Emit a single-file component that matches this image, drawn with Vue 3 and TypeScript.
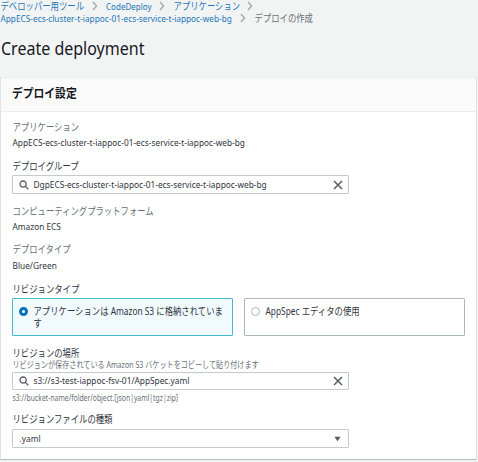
<script setup lang="ts">
import { ref } from 'vue'

const application = 'AppECS-ecs-cluster-t-iappoc-01-ecs-service-t-iappoc-web-bg'
const group = ref('DgpECS-ecs-cluster-t-iappoc-01-ecs-service-t-iappoc-web-bg')
const location = ref('s3://s3-test-iappoc-fsv-01/AppSpec.yaml')
const revisionType = ref<'s3' | 'editor'>('s3')
</script>

<template>
  <main class="page">
    <nav class="crumbs">
      <div class="crumb-row">
        <a class="crumb tools"><span class="t">デベロッパー用ツール</span></a>
        <svg class="chev" viewBox="0 0 6 10"><path d="M1 1l3.6 4L1 9" /></svg>
        <a class="crumb deploy"><span class="t en">CodeDeploy</span></a>
        <svg class="chev" viewBox="0 0 6 10"><path d="M1 1l3.6 4L1 9" /></svg>
        <a class="crumb apps"><span class="t">アプリケーション</span></a>
        <svg class="chev" viewBox="0 0 6 10"><path d="M1 1l3.6 4L1 9" /></svg>
      </div>
      <div class="crumb-row">
        <a class="crumb app"><span class="t en">{{ application }}</span></a>
        <svg class="chev" viewBox="0 0 6 10"><path d="M1 1l3.6 4L1 9" /></svg>
        <span class="crumb current"><span class="t">デプロイの作成</span></span>
      </div>
    </nav>

    <h1 class="title"><span class="t">Create deployment</span></h1>

    <section class="panel">
      <header class="panel-head"><h2 class="t">デプロイ設定</h2></header>
      <div class="panel-body">
        <div class="field">
          <div class="line muted"><span class="t">アプリケーション</span></div>
          <div class="line value"><span class="t en">{{ application }}</span></div>
        </div>

        <div class="field group">
          <div class="line"><span class="t">デプロイグループ</span></div>
          <div class="control">
            <svg class="search" viewBox="0 0 10 10"><circle cx="4.1" cy="4.1" r="3.1" /><path d="M6.4 6.4L9.3 9.3" /></svg>
            <span class="t en">{{ group }}</span>
            <svg class="clear" viewBox="0 0 10 10"><path d="M1 1l8 8M9 1L1 9" /></svg>
          </div>
        </div>

        <div class="field platform">
          <div class="line muted"><span class="t">コンピューティングプラットフォーム</span></div>
          <div class="line value"><span class="t en">Amazon ECS</span></div>
        </div>

        <div class="field type">
          <div class="line muted"><span class="t">デプロイタイプ</span></div>
          <div class="line value"><span class="t en">Blue/Green</span></div>
        </div>

        <div class="field revision">
          <div class="line"><span class="t">リビジョンタイプ</span></div>
          <div class="tiles">
            <div class="tile" :class="{ selected: revisionType === 's3' }" @click="revisionType = 's3'">
              <i class="radio"></i>
              <span class="t">アプリケーションは Amazon S3 に格納されていま<br />す</span>
            </div>
            <div class="tile" :class="{ selected: revisionType === 'editor' }" @click="revisionType = 'editor'">
              <i class="radio"></i>
              <span class="t">AppSpec エディタの使用</span>
            </div>
          </div>
        </div>

        <div class="field location">
          <div class="line"><span class="t">リビジョンの場所</span></div>
          <div class="desc"><span class="t">リビジョンが保存されている Amazon S3 バケットをコピーして貼り付けます</span></div>
          <div class="control">
            <svg class="search" viewBox="0 0 10 10"><circle cx="4.1" cy="4.1" r="3.1" /><path d="M6.4 6.4L9.3 9.3" /></svg>
            <span class="t en">{{ location }}</span>
            <svg class="clear" viewBox="0 0 10 10"><path d="M1 1l8 8M9 1L1 9" /></svg>
          </div>
          <div class="hint"><span class="t">s3://bucket-name/folder/object.[json|yaml|tgz|zip]</span></div>
        </div>

        <div class="field file">
          <div class="line"><span class="t">リビジョンファイルの種類</span></div>
          <div class="control select">
            <span class="t en">.yaml</span>
            <svg class="arrow" viewBox="0 0 8 6"><path d="M0.5 0.5h7L4 5.5z" /></svg>
          </div>
        </div>
      </div>
    </section>
  </main>
</template>

<style>
body {
  margin: 0;
  background: #f2f3f3;
  overflow: hidden;
}
</style>

<style scoped>
.page {
  box-sizing: border-box;
  width: 478px;
  height: 462px;
  overflow: hidden;
  background: #f2f3f3;
  color: #30353c;
  font-family: 'Noto Sans', 'Noto Sans CJK JP', sans-serif;
  font-size: 10.45px;
}
.t {
  display: inline-block;
  white-space: nowrap;
  transform: translateX(0.5px) scaleX(0.8);
  transform-origin: 0 50%;
}
/* Latin-only text is set smaller and less condensed than kana */
.en {
  font-size: 9.7px;
  transform: translateX(0.5px) scaleX(0.858);
}
.crumb-row {
  display: flex;
  align-items: center;
  height: 12px;
  line-height: 12px;
  color: #2277b9;
}
.crumb { flex: none; }
.crumb .en { transform: translateX(0.5px) scaleX(0.854); }
.tools { width: 92px; }
.deploy { width: 53px; margin-left: 8px; }
.deploy .en { transform: scaleX(0.83); }
.apps { width: 74px; margin-left: 8px; }
.app { width: 240px; }
.current { margin-left: 8px; color: #687078; }
.chev {
  flex: none;
  width: 6px;
  height: 10px;
  fill: none;
  stroke: #9fa9a9;
  stroke-width: 1.3;
}
.title {
  margin: 9px 0 0 1px;
  height: 30px;
  line-height: 30px;
  font-size: 17.6px;
  font-weight: 400;
  color: #16191f;
}
.title .t { transform: scaleX(0.91); }
.panel {
  box-sizing: border-box;
  width: 477px;
  height: 383px;
  margin-top: 14px;
  border: 1px solid #dfe3e3;
  border-top-color: #eaeded;
  border-bottom: 1px solid #b4bdbd;
  background: #fff;
}
.panel-head {
  height: 33px;
  background: #fafafa;
  border-bottom: 1px solid #eaeded;
  padding-left: 11px;
}
.panel-head h2 {
  margin: 0;
  font-size: 12.4px;
  line-height: 32px;
  font-weight: 700;
  color: #16191f;
  transform: scaleX(0.87);
}
.panel-body { padding: 8px 11px 0; }
.line {
  height: 14px;
  line-height: 14px;
}
.muted { color: #687078; }
.value { margin-top: 1px; }
.group { margin-top: 10px; }
.platform { margin-top: 10px; }
.type { margin-top: 9px; }
.type .value { margin-top: 2px; }
.revision { margin-top: 10px; }
.location { margin-top: 10px; }
.file { margin-top: 8px; }
.control {
  box-sizing: border-box;
  display: flex;
  align-items: center;
  width: 337px;
  height: 19px;
  margin-top: 2px;
  padding: 0 5px 0 6px;
  border: 1px solid #c3cccc;
  border-radius: 1px;
  line-height: 16px;
}
.search {
  flex: none;
  width: 10px;
  height: 10px;
  margin-right: 4px;
  fill: none;
  stroke: #545b64;
  stroke-width: 1.3;
}
.clear {
  flex: none;
  width: 10px;
  height: 10px;
  margin-left: auto;
  fill: none;
  stroke: #545b64;
  stroke-width: 1.5;
}
.tiles {
  display: flex;
  gap: 11px;
  margin-top: 2px;
}
.tile {
  box-sizing: border-box;
  display: flex;
  width: 221px;
  height: 38px;
  padding: 6px 0 0 6px;
  border: 1px solid #aab7b8;
  border-radius: 1px;
  line-height: 12px;
}
.tile.selected {
  border-color: #48b9d4;
  background: #f1faff;
}
.radio {
  box-sizing: border-box;
  flex: none;
  width: 9px;
  height: 9px;
  margin: 2px 5px 0 0;
  border: 1px solid #aab7b8;
  border-radius: 50%;
  background: #fff;
}
.selected .radio { border: 3px solid #0073bb; }
.desc {
  height: 9px;
  line-height: 9px;
  font-size: 8.9px;
  color: #687078;
}
.location .control { height: 18px; margin-top: 3px; }
.hint {
  height: 14px;
  line-height: 15px;
  font-size: 8.9px;
  color: #687078;
}
.hint .t { transform: translateX(0.5px) scaleX(0.768); }
.file .control { margin-top: 3px; }
.arrow {
  width: 7px;
  height: 6px;
  margin: 0 2px 0 auto;
  fill: #545b64;
}
</style>
